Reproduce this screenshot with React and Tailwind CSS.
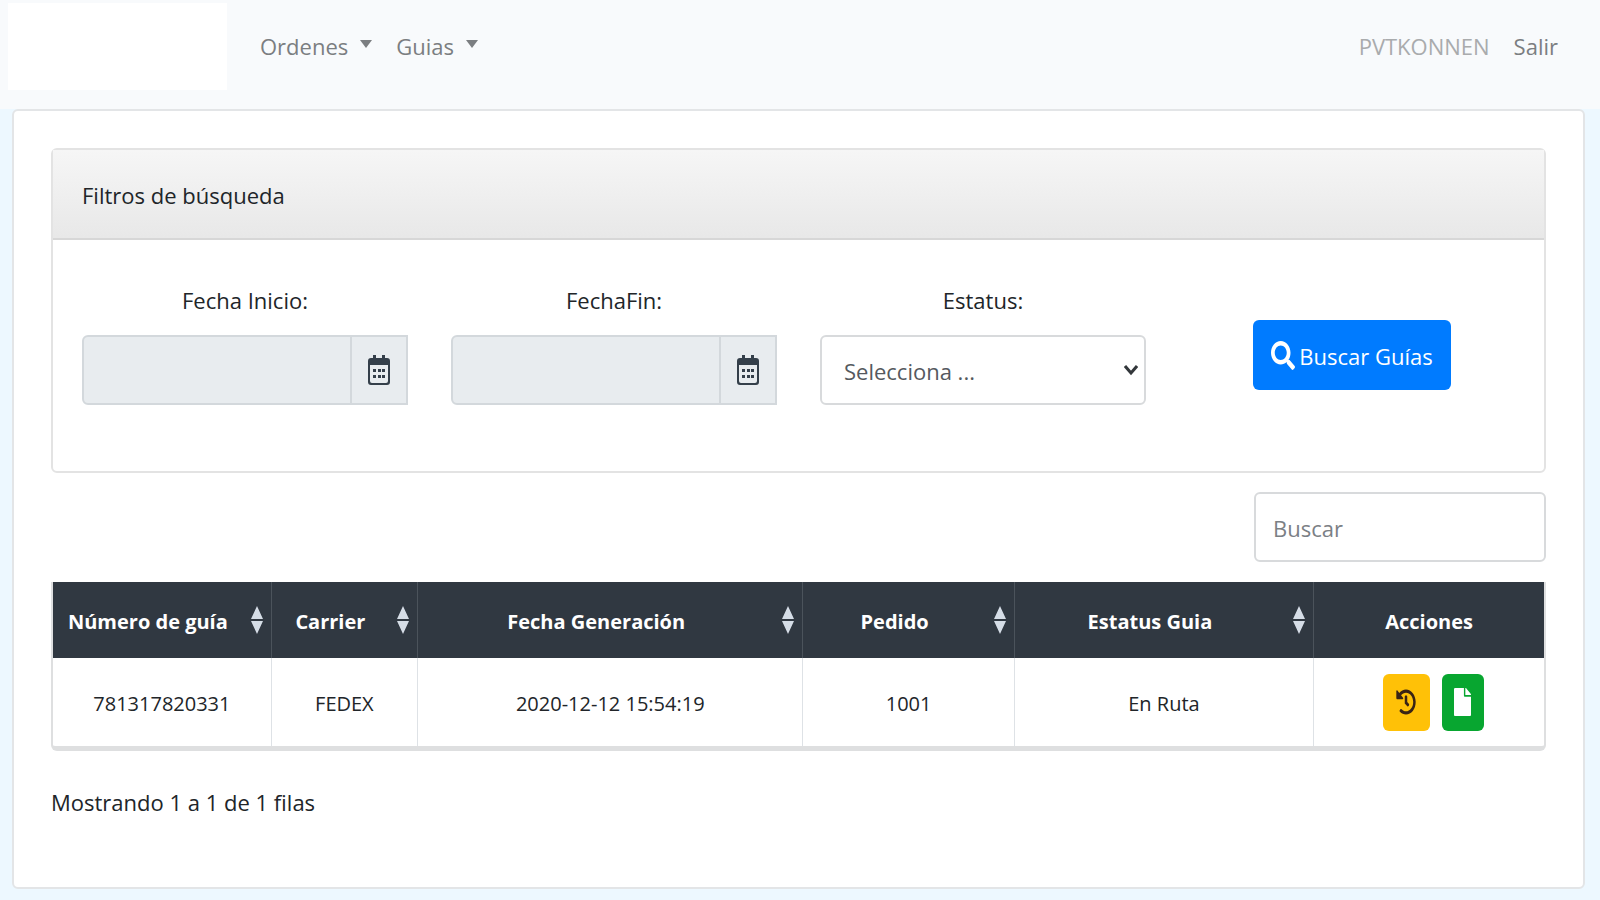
import React, { useState } from 'react';
import { FaSearch, FaHistory, FaFile } from "react-icons/fa";

const columns = [
  { key: "guia", title: "Número de guía", width: "w-[218px]", sortable: true },
  { key: "carrier", title: "Carrier", width: "w-[146px]", sortable: true },
  { key: "fecha", title: "Fecha Generación", width: "w-[385px]", sortable: true },
  { key: "pedido", title: "Pedido", width: "w-[211px]", sortable: true },
  { key: "estatus", title: "Estatus Guia", width: "w-[299px]", sortable: true },
  { key: "acciones", title: "Acciones", width: "w-[230px]", sortable: false },
];

const guias = [
  { guia: "781317820331", carrier: "FEDEX", fecha: "2020-12-12 15:54:19", pedido: "1001", estatus: "En Ruta" },
];

function Caret() {
  return (
    <svg className="w-3 h-2 mb-1" viewBox="0 0 12 8" fill="currentColor" aria-hidden="true">
      <path d="M0 0h12L6 8z" />
    </svg>
  );
}

function SortIcon() {
  return (
    <svg className="w-3 h-7 shrink-0" viewBox="0 0 12 28" fill="#d5dde6" aria-hidden="true">
      <path d="M6 0l6 13H0zM0 15h12L6 28z" />
    </svg>
  );
}

function CalendarIcon() {
  return (
    <svg className="w-[22px] h-[30px]" viewBox="0 0 22 30" fill="#343f4a" aria-hidden="true">
      <path fillRule="evenodd" d="M5 0h3v3h6V0h3v3h2q3 0 3 3v21q0 3-3 3H3q-3 0-3-3V6q0-3 3-3h2zM2 10v16q0 2 2 2h14q2 0 2-2V10z" />
      <path d="M5 14h3v3H5zM10 14h3v3h-3zM14 14h3v3h-3zM5 20h3v3H5zM10 20h3v3h-3zM14 20h3v3h-3z" />
    </svg>
  );
}

function DateField({ id, label }) {
  return (
    <div>
      <label htmlFor={id} className="block text-center leading-8">{label}</label>
      <div className="mt-[19px] flex h-[70px]">
        <input
          id={id}
          type="text"
          readOnly
          className="min-w-0 flex-1 rounded-l-md border-2 border-[#d3d8dc] bg-[#e8ecef] px-5 outline-none"
        />
        <button
          type="button"
          aria-label={`Abrir calendario ${label}`}
          className="flex w-14 items-center justify-center border-2 border-l-0 border-[#d3d8dc] bg-[#e8ecef]"
        >
          <CalendarIcon />
        </button>
      </div>
    </div>
  );
}

export default function App() {
  const [estatus, setEstatus] = useState("");
  const [search, setSearch] = useState("");

  const rows = guias.filter((g) =>
    Object.values(g).join(" ").toLowerCase().includes(search.toLowerCase())
  );

  return (
    <div className="min-h-screen bg-[#edf8ff] pb-3 font-['Open_Sans','Noto_Sans',sans-serif] text-[22px] text-[#212529]">
      {/* Navbar */}
      <nav className="flex h-[109px] items-start bg-[#f8fafc] pl-2 pr-[42px] pt-[3px] text-[#7b7e81]">
        <a href="#" aria-label="Inicio" className="h-[87px] w-[219px] bg-white" />
        <div className="ml-[33px] flex h-[86px] items-center gap-6">
          <button type="button" className="flex items-center gap-3">Ordenes <Caret /></button>
          <button type="button" className="flex items-center gap-3">Guias <Caret /></button>
        </div>
        <div className="ml-auto flex h-[86px] items-center gap-6">
          <span className="text-[#a9abad]">PVTKONNEN</span>
          <a href="#">Salir</a>
        </div>
      </nav>

      <main className="ml-3 mr-[15px] rounded-md border-2 border-[#e3e5e7] bg-white px-[37px] pb-[69px] pt-[37px]">
        {/* Filtros */}
        <section className="rounded-md border-2 border-[#e3e3e3]">
          <h2 className="flex h-[90px] items-center border-b-2 border-[#d7d7d7] bg-linear-to-b from-[#f6f6f6] to-[#e8e8e8] px-[29px] pt-0.5">
            Filtros de búsqueda
          </h2>
          <form className="grid grid-cols-4 gap-x-[43px] px-[29px] pb-[66px] pt-[44px]" onSubmit={(e) => e.preventDefault()}>
            <DateField id="fecha-inicio" label="Fecha Inicio:" />
            <DateField id="fecha-fin" label="FechaFin:" />
            <div>
              <label htmlFor="estatus" className="block text-center leading-8">Estatus:</label>
              <div className="relative mt-[19px]">
                <select
                  id="estatus"
                  value={estatus}
                  onChange={(e) => setEstatus(e.target.value)}
                  className="h-[70px] w-full appearance-none rounded-md border-2 border-[#d8dadc] bg-white px-[22px] pt-0.5 text-[#55595e]"
                >
                  <option value="">Selecciona ...</option>
                  <option value="ruta">En Ruta</option>
                </select>
                <svg className="pointer-events-none absolute right-2 top-[29px] h-3 w-[14px]" viewBox="0 0 14 12" fill="none" stroke="#33373b" strokeWidth="3" aria-hidden="true">
                  <path d="M1 2l6 7 6-7" />
                </svg>
              </div>
            </div>
            <div className="flex items-start justify-center pt-9">
              <button type="submit" className="flex h-[70px] items-center gap-1 rounded-md bg-[#007bff] px-[18px] text-white">
                <FaSearch className="h-[29px] w-6" preserveAspectRatio="none" />
                <span className="pt-0.5">Buscar Guías</span>
              </button>
            </div>
          </form>
        </section>

        <div className="mt-[19px] flex justify-end">
          <input
            type="search"
            aria-label="Buscar"
            placeholder="Buscar"
            value={search}
            onChange={(e) => setSearch(e.target.value)}
            className="h-[70px] w-[292px] rounded-md border-2 border-[#d8dadc] px-[17px] pt-0.5 outline-none placeholder:text-[#7b8085]"
          />
        </div>

        {/* Tabla */}
        <div className="mt-5 overflow-hidden rounded-b-md border-x-2 border-b-[5px] border-[#dedfe0]">
          <table className="w-full table-fixed border-collapse text-center text-[20px]">
            <thead>
              <tr className="h-[76px] bg-[#303841] text-white">
                {columns.map((col) => (
                  <th key={col.key} className={`${col.width} border-r border-[#4b535b] p-0 font-bold last:border-r-0`}>
                    {col.sortable ? (
                      <button type="button" className="flex w-full items-center pr-2 font-bold">
                        <span className="flex-1 whitespace-nowrap pr-2 pt-1">{col.title}</span>
                        <SortIcon />
                      </button>
                    ) : (
                      <span className="block pt-1">{col.title}</span>
                    )}
                  </th>
                ))}
              </tr>
            </thead>
            <tbody>
              {rows.map((row) => (
                <tr key={row.guia} className="h-[88px]">
                  <td className="border-r border-[#dee2e6] pt-1">{row.guia}</td>
                  <td className="border-r border-[#dee2e6] pt-1">{row.carrier}</td>
                  <td className="border-r border-[#dee2e6] pt-1">{row.fecha}</td>
                  <td className="border-r border-[#dee2e6] pt-1">{row.pedido}</td>
                  <td className="border-r border-[#dee2e6] pt-1">{row.estatus}</td>
                  <td>
                    <div className="flex justify-center gap-3 pl-2">
                      <button type="button" aria-label="Historial" className="flex h-[57px] w-[47px] items-center justify-center rounded-md bg-[#ffc107] text-[#3a2415]">
                        <FaHistory className="h-[26px] w-5" preserveAspectRatio="none" />
                      </button>
                      <button type="button" aria-label="Documento" className="flex h-[57px] w-[42px] items-center justify-center rounded-md bg-[#08a630] text-white">
                        <FaFile className="h-7 w-[17px]" preserveAspectRatio="none" />
                      </button>
                    </div>
                  </td>
                </tr>
              ))}
            </tbody>
          </table>
        </div>

        <p className="mt-[35px] leading-8">
          Mostrando {rows.length ? 1 : 0} a {rows.length} de {rows.length} filas
        </p>
      </main>
    </div>
  );
}
